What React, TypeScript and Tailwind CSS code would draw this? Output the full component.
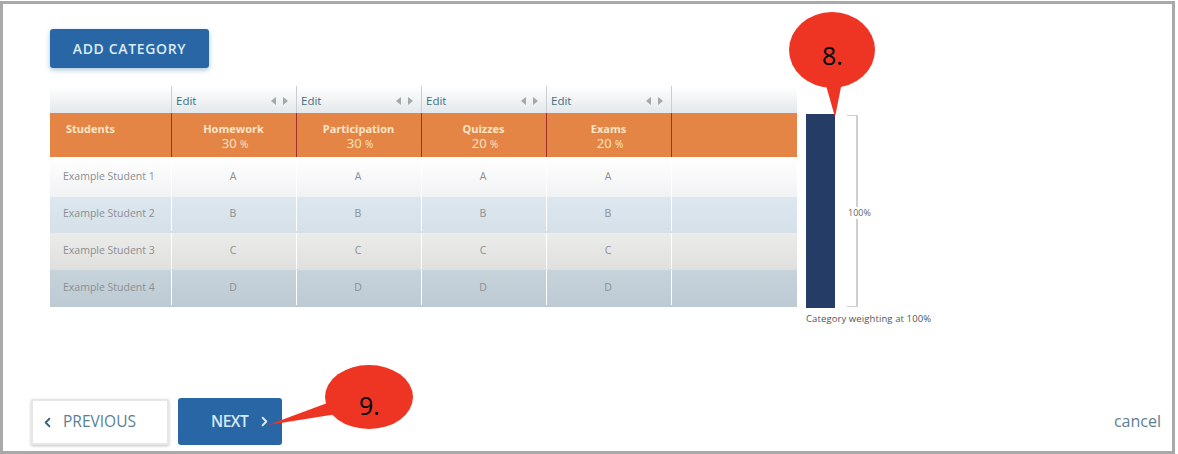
import React from 'react';
import { ChevronLeft, ChevronRight } from 'lucide-react';

const students = [
  { name: 'Example Student 1', grade: 'A', row: 'h-10 from-white to-[#f1f2f3]' },
  { name: 'Example Student 2', grade: 'B', row: 'h-[36px] pb-[2px] from-[#dce7ef] to-[#d5e0e8]' },
  { name: 'Example Student 3', grade: 'C', row: 'h-[37px] pb-[1px] from-[#ececeb] to-[#dfdfde]' },
  { name: 'Example Student 4', grade: 'D', row: 'h-[37px] pb-[2px] from-[#c7d3db] to-[#bdcad3]' },
];

const categories = [
  { name: 'Homework', weight: 30 },
  { name: 'Participation', weight: 30 },
  { name: 'Quizzes', weight: 20 },
  { name: 'Exams', weight: 20 },
];

const Callout = ({ label, className, path, textClass }: { label: string; className: string; path: React.ReactNode; textClass: string }) => (
  <div className={`absolute ${className}`}>
    <svg width="100%" height="100%" className="absolute inset-0">{path}</svg>
    <span className={`absolute text-[25px] leading-none text-black ${textClass}`}>{label}</span>
  </div>
);

const EditCell = () => (
  <div className="flex w-[125px] items-center justify-between border-l border-[#c9ced2] pl-[4px] pr-[8px] pt-[2px]">
    <span className="text-[11.5px] text-[#3f6f86]">Edit</span>
    <span className="flex gap-[7px]">
      <svg width="5" height="8" viewBox="0 0 5 8"><path d="M5 0v8L0 4z" fill="#a3a8ab" /></svg>
      <svg width="5" height="8" viewBox="0 0 5 8"><path d="M0 0v8l5-4z" fill="#a3a8ab" /></svg>
    </span>
  </div>
);

export default function App() {
  return (
    <div className="relative mt-px flex h-[453px] w-[1175px] flex-col border-[3px] border-[#a9a9a9] bg-white font-['Open_Sans',sans-serif] pl-[47px] pr-[11px]">
      {/* Add button */}
      <button className="mt-[25px] h-[39px] w-[159px] rounded-[3px] bg-[#2866a6] text-[14px] font-semibold tracking-[0.65px] text-[#d9ecf5] shadow-[0_2px_5px_rgba(90,140,190,0.5)]">
        ADD CATEGORY
      </button>

      <div className="mt-[18px] flex items-start">
        {/* Table */}
        <div className="w-[747px]">
          <div className="flex h-[27px] bg-linear-to-b from-white to-[#e4e8eb]">
            <div className="w-[121px]" />
            <EditCell />
            <EditCell />
            <EditCell />
            <EditCell />
            <div className="border-l border-[#c9ced2]" />
          </div>
          <div className="flex h-[44px] bg-[#e48545] text-[#fbe6c8]">
            <div className="flex w-[121px] items-center pl-4 pb-[11px] text-[11px] font-bold">Students</div>
            {categories.map((c) => (
              <div key={c.name} className="flex w-[125px] flex-col items-center border-l border-[#a0302a] pt-[10px] pr-[1px] leading-none">
                <span className="text-[11px] font-bold">{c.name}</span>
                <span className="mt-[3px] pl-[3px] text-[13px]">
                  {c.weight} <span className="text-[10px]">%</span>
                </span>
              </div>
            ))}
            <div className="border-l border-[#a0302a]" />
          </div>
          {students.map((s) => (
            <div key={s.name} className={`flex items-center bg-linear-to-b text-[10.5px] text-[#8b8f92] ${s.row}`}>
              <div className="flex h-full w-[121px] items-center pl-[13px]">{s.name}</div>
              {categories.map((c) => (
                <div key={c.name} className="flex h-full w-[125px] items-center justify-center border-l border-white pr-[2px]">
                  {s.grade}
                </div>
              ))}
              <div className="h-full border-l border-white" />
            </div>
          ))}
        </div>

        {/* Weighting bar */}
        <div className="ml-[9px] mt-[28px] w-[140px]">
          <div className="flex">
            <div className="h-[194px] w-[29px] bg-[#243c66]" />
            <div className="relative ml-[12px] mt-px h-[192px] w-[11px] border-y border-r-2 border-[#cfcfcf]">
              <span className="absolute left-[1px] top-[91px] bg-white text-[9px] leading-[12px] text-[#666]">100%</span>
            </div>
          </div>
          <div className="mt-[5px] whitespace-nowrap text-[9.5px] leading-[12px] tracking-[0.1px] text-[#555]">Category weighting at 100%</div>
        </div>
      </div>

      {/* Footer */}
      <div className="-ml-[19px] mt-auto mb-[6px] flex items-end gap-[9px]">
        <button className="flex h-[46px] w-[138px] items-center rounded-[2px] border-2 border-[#e6e6e6] bg-white pl-[7px] text-[15.5px] text-[#5a7f95] shadow-[0_1px_3px_rgba(0,0,0,0.25)]">
          <ChevronLeft size={15} strokeWidth={3} className="text-[#3f6478]" />
          <span className="ml-[8px]">PREVIOUS</span>
        </button>
        <button className="flex h-[47px] w-[104px] items-center rounded-[3px] bg-[#2866a6] pl-[33px] text-[15.5px] font-semibold tracking-[-0.5px] text-[#d5eaf4]">
          NEXT
          <ChevronRight size={15} strokeWidth={3} className="ml-[9px]" />
        </button>
        <a className="mb-[13px] ml-auto text-[16px] leading-[22px] text-[#5d8093]">cancel</a>
      </div>

      {/* Annotation balloons */}
      <Callout
        label="8."
        className="left-[786px] top-[8px] h-[110px] w-[90px]"
        textClass="left-[33px] top-[31px]"
        path={
          <>
            <ellipse cx="43" cy="38" rx="43" ry="38" fill="#ee3524" />
            <path d="M36 70 L46 105 L53 70 Z" fill="#ee3524" />
          </>
        }
      />
      <Callout
        label="9."
        className="left-[262px] top-[360px] h-[70px] w-[150px]"
        textClass="left-[94px] top-[29px]"
        path={
          <>
            <ellipse cx="104" cy="33" rx="44" ry="32" fill="#ee3524" />
            <path d="M65 38 L3 61 L72 50 Z" fill="#ee3524" />
          </>
        }
      />
    </div>
  );
}
